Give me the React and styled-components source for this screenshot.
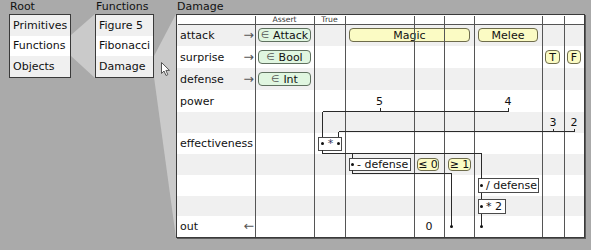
import React from 'react';
import styled, { createGlobalStyle } from 'styled-components';

const GlobalStyle = createGlobalStyle`
  html, body { margin: 0; padding: 0; background: #aaaaaa; }
  body {
    font-family: "DejaVu Sans", Verdana, sans-serif;
    font-size: 11px;
    color: #111;
  }
`;

const COLS = '78px 59px 31px 69px 30px 30px 68px 22px 20px';
const ROW_H = [22, 22, 22, 22, 21, 21, 21, 21, 20, 21];

const Page = styled.div`
  position: relative;
  width: 591px;
  height: 250px;
  box-sizing: border-box;
  padding-left: 9px;
  display: flex;
  align-items: flex-start;
  overflow: hidden;
`;

const Panel = styled.div`
  display: flex;
  flex-direction: column;
  flex: none;
`;

const PanelTitle = styled.div`
  height: 14px;
  line-height: 14px;
  padding-left: 1px;
  white-space: nowrap;
`;

const ListBox = styled.div`
  width: ${(p) => p.$w}px;
  height: 64px;
  box-sizing: border-box;
  border: 1px solid #3a3a3a;
  background: #fff;
  display: grid;
  grid-template-rows: repeat(3, 1fr);
`;

const ListItem = styled.div`
  display: flex;
  align-items: center;
  padding-left: 3px;
  white-space: nowrap;
  background: ${(p) => (p.$stripe ? '#f0f0f0' : '#ffffff')};
`;

const FunnelSvg = styled.svg`
  display: block;
  flex: none;
  margin-top: 14px;
`;

const TableBox = styled.div`
  position: relative;
  width: 409px;
  height: 224px;
  box-sizing: border-box;
  border: 1px solid #3a3a3a;
  box-shadow: 1px 1px 0 #5c5c5c;
  background: #fff;
`;

const Row = styled.div`
  display: grid;
  grid-template-columns: ${COLS};
  height: ${(p) => p.$h}px;
  background: ${(p) => (p.$stripe ? '#f0f0f0' : '#ffffff')};
`;

const Cell = styled.div`
  grid-column: ${(p) => p.$col};
  display: flex;
  align-items: center;
  justify-content: ${(p) => p.$justify || 'flex-start'};
  padding: 0 ${(p) => p.$pr || 0}px 0 ${(p) => p.$pl || 0}px;
  min-width: 0;
  white-space: nowrap;
`;

const HeadText = styled.span`
  font-size: 7.7px;
  color: #333;
  line-height: 9px;
`;

const Arrow = styled.span`
  color: #555;
  font-size: 12.5px;
  line-height: 1;
`;

const Pill = styled.div`
  box-sizing: border-box;
  height: ${(p) => p.$h || 14}px;
  width: ${(p) => (p.$w ? `${p.$w}px` : '100%')};
  border: 1px solid ${(p) => (p.$tone === 'green' ? '#5f705f' : '#6e6c4c')};
  background: ${(p) => (p.$tone === 'green' ? '#e0f6e0' : '#fbfbc4')};
  border-radius: 4px;
  display: flex;
  align-items: center;
  justify-content: center;
  line-height: 1;
  color: #111;
`;

const Elem = styled.span`
  color: #555;
  font-size: 9.5px;
  margin-right: 4px;
`;

const Node = styled.div`
  box-sizing: border-box;
  width: ${(p) => p.$w}px;
  height: ${(p) => p.$h || 14}px;
  border: 1px solid #4a4a4a;
  background: #fff;
  display: flex;
  align-items: center;
  justify-content: ${(p) => (p.$spread ? 'space-between' : 'flex-start')};
  gap: 3px;
  padding: 0 1px 0 ${(p) => p.$pl || 1}px;
  line-height: 1;
`;

const Dot = styled.span`
  width: 3px;
  height: 3px;
  border-radius: 50%;
  background: #111;
  flex: none;
`;

const Op = styled.span`
  color: ${(p) => p.$c || '#111'};
`;

const Overlay = styled.svg`
  position: absolute;
  left: 0;
  top: 0;
  pointer-events: none;
`;

const Cursor = styled.svg`
  position: absolute;
  left: 161px;
  top: 62px;
`;

const GRID_X = [253, 312, 343, 412, 442, 472, 540, 562];

const WIRES = [
  'M378 107 V111', 'M506 107 V111', 'M320 111 H506', 'M320 111 V136',
  'M551 128 V131', 'M572 128 V131', 'M336 131 H572', 'M336 131 V136',
  'M320 149 V153 H479 V178', 'M350 153 V157', 'M479 192 V198', 'M479 213 V226',
  'M350 169 V173 H449 V226',
];

function Funnel({ w, h, pts }) {
  return (
    <FunnelSvg width={w} height={h} viewBox={`0 0 ${w} ${h}`}>
      <polygon points={pts} fill="#cacaca" />
    </FunnelSvg>
  );
}

function LabelCell({ children, arrow }) {
  return (
    <Cell $col="1" $pl={3} $pr={1} $justify="space-between">
      <span>{children}</span>
      {arrow && <Arrow>{arrow}</Arrow>}
    </Cell>
  );
}

export default function App() {
  return (
    <>
      <GlobalStyle />
      <Page>
        <Panel>
          <PanelTitle>Root</PanelTitle>
          <ListBox $w={62}>
            <ListItem $stripe>Primitives</ListItem>
            <ListItem>Functions</ListItem>
            <ListItem $stripe>Objects</ListItem>
          </ListBox>
        </Panel>
        <Funnel w={24} h={64} pts="0,21 24,0 24,64 0,42" />
        <Panel>
          <PanelTitle>Functions</PanelTitle>
          <ListBox $w={59}>
            <ListItem $stripe>Figure 5</ListItem>
            <ListItem>Fibonacci</ListItem>
            <ListItem $stripe>Damage</ListItem>
          </ListBox>
        </Panel>
        <Funnel w={22} h={224} pts="0,42 22,0 22,224 0,63" />
        <Panel>
          <PanelTitle>Damage</PanelTitle>
          <TableBox>
            <Row $h={9}>
              <Cell $col="2" $justify="center"><HeadText>Assert</HeadText></Cell>
              <Cell $col="3" $justify="center"><HeadText>True</HeadText></Cell>
            </Row>
            <Row $h={ROW_H[0]} $stripe>
              <LabelCell arrow="→">attack</LabelCell>
              <Cell $col="2" $pl={3} $pr={3}><Pill $tone="green"><Elem>∈</Elem>Attack</Pill></Cell>
              <Cell $col="4 / 7" $pl={4} $pr={4}><Pill $tone="yellow">Magic</Pill></Cell>
              <Cell $col="7" $pl={4} $pr={4}><Pill $tone="yellow">Melee</Pill></Cell>
            </Row>
            <Row $h={ROW_H[1]}>
              <LabelCell arrow="→">surprise</LabelCell>
              <Cell $col="2" $pl={3} $pr={3}><Pill $tone="green"><Elem>∈</Elem>Bool</Pill></Cell>
              <Cell $col="8" $pl={3}><Pill $tone="yellow" $w={15}>T</Pill></Cell>
              <Cell $col="9" $pl={3}><Pill $tone="yellow" $w={14}>F</Pill></Cell>
            </Row>
            <Row $h={ROW_H[2]} $stripe>
              <LabelCell arrow="→">defense</LabelCell>
              <Cell $col="2" $pl={3} $pr={3}><Pill $tone="green"><Elem>∈</Elem>Int</Pill></Cell>
            </Row>
            <Row $h={ROW_H[3]}>
              <LabelCell>power</LabelCell>
              <Cell $col="4" $justify="center">5</Cell>
              <Cell $col="7" $justify="center">4</Cell>
            </Row>
            <Row $h={ROW_H[4]} $stripe>
              <Cell $col="8" $justify="center">3</Cell>
              <Cell $col="9" $justify="center">2</Cell>
            </Row>
            <Row $h={ROW_H[5]}>
              <LabelCell>effectiveness</LabelCell>
              <Cell $col="3" $pl={4}>
                <Node $w={24} $pl={2} $spread><Dot /><Op $c="#33335a">*</Op><Dot /></Node>
              </Cell>
            </Row>
            <Row $h={ROW_H[6]} $stripe>
              <Cell $col="4" $pl={4}>
                <Node $w={62} $h={13}><Dot /><Op>- defense</Op></Node>
              </Cell>
              <Cell $col="5" $pl={3}><Pill $tone="yellow" $w={22} $h={13}>≤ 0</Pill></Cell>
              <Cell $col="6" $pl={4}><Pill $tone="yellow" $w={23} $h={13}>≥ 1</Pill></Cell>
            </Row>
            <Row $h={ROW_H[7]}>
              <Cell $col="7" $pl={4}>
                <Node $w={61} $h={15}><Dot /><Op>/ defense</Op></Node>
              </Cell>
            </Row>
            <Row $h={ROW_H[8]} $stripe>
              <Cell $col="7" $pl={4}>
                <Node $w={28} $h={15}><Dot /><Op>* 2</Op></Node>
              </Cell>
            </Row>
            <Row $h={ROW_H[9]}>
              <LabelCell arrow="←">out</LabelCell>
              <Cell $col="5" $justify="center">0</Cell>
            </Row>
            <Overlay width="407" height="222" viewBox="0 0 407 222">
              <g transform="translate(-174.5 -14.5)" fill="none" shapeRendering="crispEdges">
                {GRID_X.map((x) => (
                  <line key={x} x1={x} y1={15} x2={x} y2={237} stroke="#555" />
                ))}
                <line x1={175} y1={24} x2={582} y2={24} stroke="#555" />
                {WIRES.map((d) => (
                  <path key={d} d={d} stroke="#2a2a2a" />
                ))}
              </g>
              <g transform="translate(-175 -15)" fill="#111">
                <circle cx={449.5} cy={226.5} r={1.5} />
                <circle cx={479.5} cy={226.5} r={1.5} />
              </g>
            </Overlay>
          </TableBox>
        </Panel>
        <Cursor width="10" height="15" viewBox="0 0 10 15">
          <path d="M0.5 0.5 L0.5 11.5 L3 9 L5 13.5 L6.8 12.7 L4.9 8.4 L8.5 8.4 Z" fill="#fff" stroke="#555" strokeWidth="1" />
        </Cursor>
      </Page>
    </>
  );
}
